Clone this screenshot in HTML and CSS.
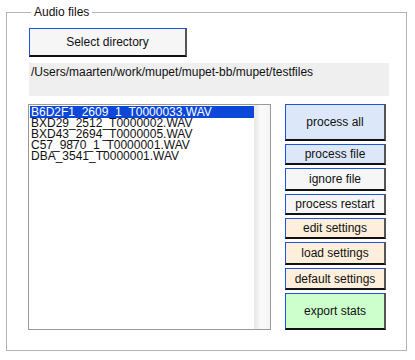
FILE: index.html
```html
<!DOCTYPE html>
<html lang="en">
<head>
    <meta charset="UTF-8">
    <title>Audio files</title>
    <link rel="stylesheet" href="styles.css">
</head>
<body>
    <fieldset class="panel">
        <legend><span class="legend-text">Audio files</span></legend>

        <button class="btn btn-dir">Select directory</button>
        <div class="path">/Users/maarten/work/mupet/mupet-bb/mupet/testfiles</div>

        <div class="main">
            <div class="listbox">
                <ul class="files">
                    <li class="selected">B6D2F1_2609_1_T0000033.WAV</li>
                    <li>BXD29_2512_T0000002.WAV</li>
                    <li>BXD43_2694_T0000005.WAV</li>
                    <li>C57_9870_1_T0000001.WAV</li>
                    <li>DBA_3541_T0000001.WAV</li>
                </ul>
                <div class="scrollbar"></div>
            </div>

            <div class="actions">
                <button class="btn blue h-big">process all</button>
                <button class="btn blue h-21">process file</button>
                <button class="btn gray h-23">ignore file</button>
                <button class="btn gray h-21">process restart</button>
                <button class="btn beige h-21">edit settings</button>
                <button class="btn beige h-23">load settings</button>
                <button class="btn beige h-22">default settings</button>
                <button class="btn green h-big">export stats</button>
            </div>
        </div>
    </fieldset>
</body>
</html>
```

FILE: styles.css
```css
body {
    margin: 0;
    background: #fff;
    font-family: "Liberation Sans", Arial, sans-serif;
    font-size: 12px;
    color: #111;
}

/* group box */
.panel {
    box-sizing: border-box;
    width: 401px;
    height: 346px;
    margin: 5px 0 0 6px;
    padding: 9px 0 0 22px;
    border: 1px solid #b4b4b4;
}
.panel legend {
    padding: 0 3px;
    margin-left: 2px;
    line-height: 14px;
}
.legend-text {
    font-family: "Liberation Sans", Arial, sans-serif;
    font-size: 12px;
    color: #111;
}

/* buttons */
.btn {
    box-sizing: border-box;
    display: block;
    width: 101px;
    padding: 0;
    font-family: "Liberation Sans", Arial, sans-serif;
    font-size: 12px;
    color: #111;
    background: #f6f6f6;
    border-style: solid;
    border-width: 1px 2px 2px 1px;
    border-color: #1a55e0 #555 #111 #1a55e0;
    border-radius: 0;
}
.btn-dir {
    width: 158px;
    height: 29px;
}
.blue { background: #dce8fa; }
.gray { background: #f6f6f6; }
.beige { background: #fdefdc; }
.green { background: #ccffcc; }
.h-big { height: 37px; }
.h-21 { height: 21px; }
.h-22 { height: 22px; }
.h-23 { height: 23px; }

.path {
    box-sizing: border-box;
    width: 360px;
    height: 33px;
    margin-top: 6px;
    padding: 2px 2px;
    background: #efefef;
    line-height: 14px;
}

.main {
    display: flex;
    gap: 14px;
    margin-top: 8px;
    margin-left: -1px;
}

/* file list */
.listbox {
    box-sizing: border-box;
    display: flex;
    width: 243px;
    height: 226px;
    border: 1px solid #999;
    background: #fff;
}
.files {
    flex: 1;
    list-style: none;
    margin: 0;
    padding: 1px 0 0 1px;
}
.files li {
    height: 11px;
    line-height: 11px;
    padding-left: 1px;
    white-space: nowrap;
    color: #111;
}
.files li.selected {
    background: #0b48d9;
    color: #fff;
    height: 12px;
    line-height: 12px;
}
.scrollbar {
    width: 15px;
    background: linear-gradient(90deg, #e8e8e8, #fbfbfb 40%, #f4f4f4);
    border-left: 1px solid #ececec;
}

.actions {
    display: flex;
    flex-direction: column;
    gap: 3px;
}
```
